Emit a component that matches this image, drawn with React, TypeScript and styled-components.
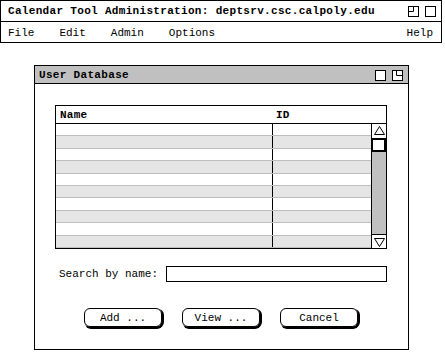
import styled, { createGlobalStyle } from 'styled-components';

const GlobalStyle = createGlobalStyle`
  * { box-sizing: border-box; }
  body {
    margin: 0;
    background: #ffffff;
    font-family: "Liberation Mono", "DejaVu Sans Mono", monospace;
    color: #000;
  }
`;

const Page = styled.div`
  width: 445px;
  height: 352px;
  overflow: hidden;
`;

const AppWindow = styled.div`
  width: 442px;
  border: 1px solid #000;
`;

const AppTitleBar = styled.div`
  height: 21px;
  display: flex;
  align-items: center;
  padding: 0 5px 0 7px;
  border-bottom: 1px solid #000;
`;

const Title = styled.div`
  flex: 1;
  font-weight: bold;
  font-size: 11px;
  letter-spacing: 0.32px;
  white-space: nowrap;
`;

const WinButtons = styled.div`
  display: flex;
  gap: 6px;
  padding-top: 1px;
`;

const MenuBar = styled.div`
  height: 20px;
  display: flex;
  align-items: center;
  gap: 25px;
  padding: 1px 8px 0 7px;
  font-size: 11px;
`;

const MenuItem = styled.span<{ $right?: boolean }>`
  margin-left: ${(p) => (p.$right ? 'auto' : '0')};
`;

const Dialog = styled.div`
  margin: 22px 0 0 34px;
  width: 375px;
  height: 285px;
  border: 1px solid #000;
  display: flex;
  flex-direction: column;
`;

const DialogTitleBar = styled.div`
  height: 18px;
  background: #c0c0c0;
  border-bottom: 1px solid #000;
  display: flex;
  align-items: center;
  padding: 0 5px 0 4px;
`;

const DialogBody = styled.div`
  padding: 21px 21px 0 20px;
  display: flex;
  flex-direction: column;
`;

const Table = styled.div`
  width: 332px;
  height: 144px;
  border: 1px solid #000;
  display: flex;
  flex-direction: column;
`;

const HeaderRow = styled.div`
  height: 18px;
  flex: none;
  border-bottom: 1px solid #000;
  display: grid;
  grid-template-columns: 217px 1fr;
  align-items: center;
  font-size: 11px;
  letter-spacing: 0.26px;
  font-weight: bold;
`;

const HeaderCell = styled.div<{ $pad: number }>`
  padding-left: ${(p) => p.$pad}px;
`;

const TableBody = styled.div`
  flex: 1;
  display: flex;
`;

const Rows = styled.div`
  flex: 1;
  display: flex;
  flex-direction: column;
`;

const Row = styled.div<{ $shaded: boolean }>`
  flex: 1;
  display: grid;
  grid-template-columns: 216px 1fr;
  background: ${(p) => (p.$shaded ? '#e5e5e5' : '#ffffff')};
  border-top: ${(p) => (p.$shaded ? '1px solid #bebebe' : 'none')};
  border-bottom: ${(p) => (p.$shaded ? '1px solid #bebebe' : 'none')};
`;

const Cell = styled.div<{ $divider?: boolean }>`
  border-left: ${(p) => (p.$divider ? '1px solid #000' : 'none')};
`;

const ScrollBar = styled.div`
  width: 15px;
  border-left: 1px solid #000;
  background: #c0c0c0;
  display: flex;
  flex-direction: column;
`;

const ArrowBox = styled.div<{ $bottom?: boolean }>`
  height: 14px;
  background: #fff;
  display: flex;
  align-items: center;
  justify-content: center;
  margin-top: ${(p) => (p.$bottom ? 'auto' : '0')};
  border-top: ${(p) => (p.$bottom ? '1px solid #000' : 'none')};
`;

const Thumb = styled.div`
  height: 14px;
  background: #fff;
  border: 2px solid #000;
  margin-left: -1px;
`;

const SearchRow = styled.div`
  margin-top: 17px;
  display: flex;
  align-items: center;
  font-size: 11px;
  padding-left: 4px;
`;

const SearchInput = styled.div`
  margin-left: 8px;
  width: 221px;
  height: 16px;
  border: 1px solid #000;
  background: #fff;
`;

const ButtonRow = styled.div`
  margin-top: 26px;
  display: flex;
  justify-content: center;
  gap: 20px;
`;

const Button = styled.div`
  width: 78px;
  height: 19px;
  border: 1px solid #000;
  border-radius: 6px;
  box-shadow: 1px 1px 0 #000, 2px 1px 0 #000, 1px 2px 0 #000;
  display: flex;
  align-items: center;
  justify-content: center;
  font-size: 11px;
  white-space: pre;
`;

const BoxIcon = ({ corner }: { corner?: 'left' | 'right' }) => (
  <svg width="11" height="11" viewBox="0 0 11 11">
    <rect x="0.5" y="0.5" width="10" height="10" fill="#fff" stroke="#000" />
    {corner === 'left' && <path d="M5.5 0.5 V5.5 H0.5" fill="none" stroke="#000" />}
    {corner === 'right' && <path d="M4.5 0.5 V5.5 H10.5" fill="none" stroke="#000" />}
  </svg>
);

const Arrow = ({ down }: { down?: boolean }) => (
  <svg width="11" height="10" viewBox="0 0 11 10">
    <path
      d={down ? 'M0.5 1.5 H10.5 L5.5 9.5 Z' : 'M5.5 0.5 L10.5 8.5 H0.5 Z'}
      fill="#fff"
      stroke="#000"
    />
  </svg>
);

const rows = Array.from({ length: 10 }, (_, i) => i);

export default function App() {
  return (
    <Page>
      <GlobalStyle />
      <AppWindow>
        <AppTitleBar>
          <Title>Calendar Tool Administration: deptsrv.csc.calpoly.edu</Title>
          <WinButtons>
            <BoxIcon corner="left" />
            <BoxIcon />
          </WinButtons>
        </AppTitleBar>
        <MenuBar>
          <MenuItem>File</MenuItem>
          <MenuItem>Edit</MenuItem>
          <MenuItem>Admin</MenuItem>
          <MenuItem>Options</MenuItem>
          <MenuItem $right>Help</MenuItem>
        </MenuBar>
      </AppWindow>

      <Dialog>
        <DialogTitleBar>
          <Title>User Database</Title>
          <WinButtons>
            <BoxIcon />
            <BoxIcon corner="right" />
          </WinButtons>
        </DialogTitleBar>
        <DialogBody>
          <Table>
            <HeaderRow>
              <HeaderCell $pad={4}>Name</HeaderCell>
              <HeaderCell $pad={3}>ID</HeaderCell>
            </HeaderRow>
            <TableBody>
              <Rows>
                {rows.map((i) => (
                  <Row key={i} $shaded={i % 2 === 1}>
                    <Cell />
                    <Cell $divider />
                  </Row>
                ))}
              </Rows>
              <ScrollBar>
                <ArrowBox>
                  <Arrow />
                </ArrowBox>
                <Thumb />
                <ArrowBox $bottom>
                  <Arrow down />
                </ArrowBox>
              </ScrollBar>
            </TableBody>
          </Table>
          <SearchRow>
            Search by name:
            <SearchInput />
          </SearchRow>
          <ButtonRow>
            <Button>Add ...</Button>
            <Button>View ...</Button>
            <Button>Cancel</Button>
          </ButtonRow>
        </DialogBody>
      </Dialog>
    </Page>
  );
}
